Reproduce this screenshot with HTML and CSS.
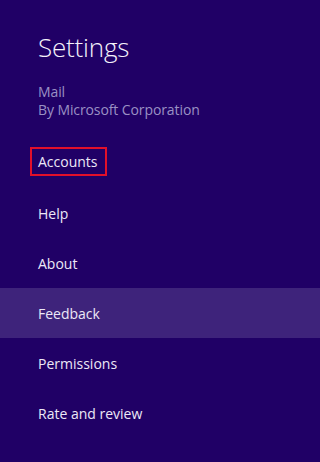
FILE: index.html
```html
<!DOCTYPE html>
<html>
<head>
<meta charset="utf-8">
<link rel="stylesheet" href="styles.css">
</head>
<body>
<div class="pane">
  <header class="head">
    <h1 class="title">Settings</h1>
    <div class="app">
      <div class="app-name">Mail</div>
      <div class="app-pub">By Microsoft Corporation</div>
    </div>
  </header>
  <ul class="menu">
    <li class="item"><span class="focus">Accounts</span></li>
    <li class="item">Help</li>
    <li class="item">About</li>
    <li class="item hover">Feedback</li>
    <li class="item">Permissions</li>
    <li class="item">Rate and review</li>
  </ul>
</div>
</body>
</html>
```
FILE: styles.css
```css
html, body {
  margin: 0;
  padding: 0;
  background: #200066;
  height: 100%;
}
body {
  font-family: "Open Sans", "Noto Sans", "Liberation Sans", sans-serif;
  color: #ece8f6;
  overflow: hidden;
}
.pane {
  width: 100%;
  height: 462px;
  background: #200066;
}
.head {
  padding: 30px 0 0 38px;
  height: 108px;
  box-sizing: border-box;
}
.title {
  margin: 0;
  font-size: 26px;
  font-weight: 300;
  line-height: 34px;
  color: #f4f2fa;
  letter-spacing: -0.2px;
}
.app {
  margin-top: 19px;
  color: #9a90c4;
  font-size: 14px;
  line-height: 18px;
  letter-spacing: -0.1px;
}
.menu {
  list-style: none;
  margin: 30px 0 0 0;
  padding: 0;
}
.item {
  height: 50px;
  display: flex;
  align-items: center;
  padding-left: 38px;
  font-size: 14px;
}
.item.hover {
  background: #3e237b;
}
.focus {
  margin-left: -8px;
  margin-top: -3px;
  padding: 0 7px 0 6px;
  border: 2px solid #e2102a;
  line-height: 25px;
}
```
